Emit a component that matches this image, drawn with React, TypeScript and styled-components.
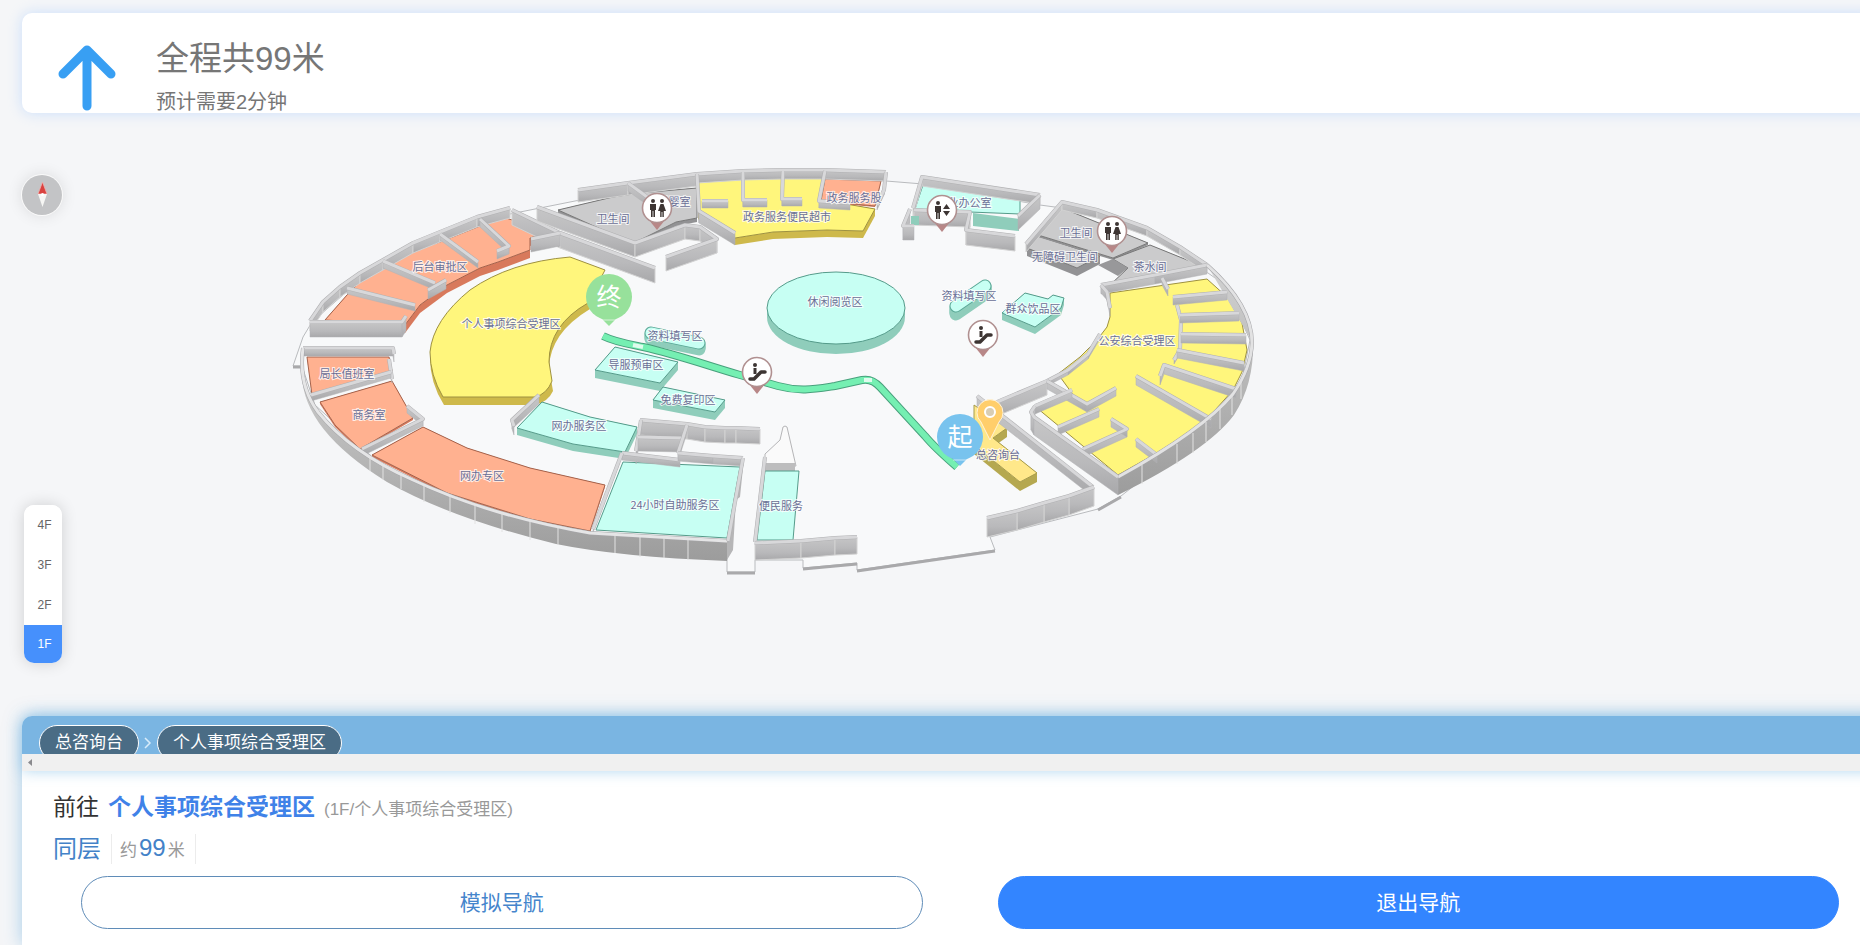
import React, { useState } from 'react';
import styled, { createGlobalStyle } from 'styled-components';

const GlobalStyle = createGlobalStyle`
  * { box-sizing: border-box; }
  body {
    margin: 0;
    background: #f5f6f8;
    font-family: "Liberation Sans", "Noto Sans CJK SC", sans-serif;
    overflow: hidden;
  }
  button { font-family: inherit; cursor: pointer; }
`;

const Page = styled.div`
  display: flex;
  flex-direction: column;
  min-height: 100vh;
  padding: 13px 0 0 22px;
  overflow: hidden;
`;

const Summary = styled.header`
  display: flex;
  height: 100px;
  flex: none;
  gap: 40px;
  margin-right: -22px;
  padding-left: 36px;
  background: #fff;
  border-radius: 10px;
  box-shadow: 0 0 14px rgba(150, 195, 255, 0.45);
`;

const ArrowIcon = styled.svg`
  width: 58px;
  height: 70px;
  margin-top: 30px;
`;

const SummaryText = styled.div`
  padding-top: 24px;
  color: #767676;
`;

const Total = styled.h1`
  margin: 0;
  font-size: 33px;
  line-height: 44px;
  font-weight: 400;
`;

const Estimate = styled.p`
  margin: 7px 0 0;
  font-size: 20px;
  line-height: 28px;
`;

const Stage = styled.main`
  display: grid;
  grid-template-columns: 42px 1fr;
  height: 603px;
  flex: none;
`;

const Rail = styled.aside`
  display: flex;
  flex-direction: column;
  justify-content: space-between;
  align-items: flex-start;
  padding: 62px 0 53px;
`;

const Compass = styled.button`
  width: 40px;
  height: 40px;
  padding: 0;
  border: 0;
  border-radius: 50%;
  background: #c3c4c6;
  box-shadow: 0 0 0 1px #fafafa, 0 0 16px rgba(0, 0, 0, 0.12);
  svg { display: block; }
`;

const Floors = styled.nav`
  display: flex;
  flex-direction: column;
  width: 38px;
  margin-left: 2px;
  overflow: hidden;
  border-radius: 10px;
  background: #fff;
  box-shadow: 0 0 16px rgba(0, 0, 0, 0.16);
`;

const FloorButton = styled.button<{ $active: boolean }>`
  height: 40px;
  padding: 0 0 0 3px;
  border: 0;
  font-size: 12px;
  color: ${p => (p.$active ? '#fff' : '#666')};
  background: ${p => (p.$active ? '#4690fc' : '#fff')};
  &:last-child { height: 38px; }
`;

const MapView = styled.svg`
  width: 1000px;
  height: 440px;
  margin: 37px 0 0 216px;
`;

const MapLabel = styled.text`
  font: 11px "Noto Sans CJK SC", sans-serif;
  fill: #6a6f96;
  stroke: rgba(255, 255, 255, 0.8);
  stroke-width: 2px;
  paint-order: stroke;
  text-anchor: middle;
  dominant-baseline: central;
`;

const PinText = styled.text`
  font: 25px "Noto Sans CJK SC", sans-serif;
  fill: #fff;
  text-anchor: middle;
  dominant-baseline: central;
`;

const Panel = styled.section`
  flex: 1;
  margin-right: -22px;
  background: #fff;
  border-radius: 10px 10px 0 0;
  box-shadow: 0 0 18px rgba(90, 165, 220, 0.5);
`;

const Trail = styled.div`
  border-radius: 10px 10px 0 0;
  background: #7ab5e2;
  box-shadow: 0 0 14px rgba(100, 175, 225, 0.5);
`;

const TrailSteps = styled.ol`
  display: flex;
  height: 38px;
  margin: 0;
  padding: 9px 0 0 17px;
  overflow: hidden;
  list-style: none;
`;

const Step = styled.li`
  display: flex;
  align-items: flex-start;
`;

const StepPill = styled.span`
  height: 36px;
  padding: 0 15px;
  border: 1px solid #fff;
  border-radius: 18px;
  background: #4a6c85;
  color: #fff;
  font-size: 17px;
  line-height: 33px;
  white-space: nowrap;
`;

const StepArrow = styled.svg`
  width: 18px;
  height: 34px;
`;

const ScrollTrack = styled.div`
  height: 17px;
  background: #f0f0f0;
  svg { display: block; }
`;

const Route = styled.div`
  padding: 18px 43px 0 31px;
`;

const Destination = styled.h2`
  display: flex;
  align-items: baseline;
  gap: 9px;
  margin: 0;
  font-size: 23px;
  line-height: 36px;
  font-weight: 400;
  color: #333;
  strong { color: #3f82e8; }
  small { font-size: 17px; color: #999; }
`;

const Distance = styled.p`
  display: flex;
  align-items: center;
  height: 30px;
  margin: 6px 0 12px;
  font-size: 24px;
  line-height: 30px;
  color: #4382c8;
`;

const Meters = styled.span`
  display: flex;
  align-items: baseline;
  gap: 2px;
  height: 30px;
  margin-left: 10px;
  padding: 0 10px 0 8px;
  border: solid #ececec;
  border-width: 0 1px;
  line-height: 28px;
  small { font-size: 17px; color: #999; }
`;

const Actions = styled.div`
  display: grid;
  grid-template-columns: 1fr 1fr;
  gap: 75px;
  padding-left: 28px;
`;

const ActionButton = styled.button<{ $primary?: boolean }>`
  height: 53px;
  padding: 0 0 4px;
  border: 1px solid ${p => (p.$primary ? '#3385ff' : '#5f8cb8')};
  border-radius: 27px;
  background: ${p => (p.$primary ? '#3385ff' : '#fff')};
  color: ${p => (p.$primary ? '#fff' : '#4585cc')};
  font-size: 21px;
`;

type P = [number, number];

// Parses "x,y x,y" into coordinate pairs.
const parse = (s: string): P[] => s.split(' ').map(q => q.split(',').map(Number) as P);

const faces = (pts: P[], h: number) =>
  pts.slice(1).map((b, i) => {
    const a = pts[i];
    return `M${a[0]} ${a[1]}L${b[0]} ${b[1]}v${h}L${a[0]} ${a[1] + h}Z`;
  });

const Wall = ({ at, h = 8, seams = false }: { at: string; h?: number; seams?: boolean }) => {
  const pts = parse(at);
  return (
    <g strokeLinejoin="round">
      {faces(pts, h).map((d, i) => (
        <path key={i} d={d} fill="url(#wallFace)" stroke={seams ? '#d2d2d2' : '#b2b2b4'} strokeWidth={seams ? 1 : 0.5} />
      ))}
      <polyline points={at} fill="none" stroke="#b0b0b2" strokeWidth="4" />
      <polyline points={at} fill="none" stroke="#d8d8da" strokeWidth="3" />
    </g>
  );
};

const TONES = {
  orange: ['#ffb190', '#d8795c', '#a5634c'],
  yellow: ['#fff67c', '#ceb94b', '#9e9140'],
  teal: ['#c7fff3', '#8fcdbb', '#559b8a'],
  gray: ['#cbcbcc', '#929294', '#777'],
  desk: ['#ffe88a', '#b5a850', '#a69b4c'],
};

const Slab = ({ at, h = 0, tone }: { at: string; h?: number; tone: keyof typeof TONES }) => {
  const pts = parse(at);
  const [top, side, edge] = TONES[tone];
  return (
    <g strokeLinejoin="round">
      {h > 0 && faces([...pts, pts[0]], h).map((d, i) => <path key={i} d={d} fill={side} />)}
      <polygon points={at} fill={top} stroke={edge} strokeWidth="1" />
    </g>
  );
};

const Bean = ({ from, to, h }: { from: P; to: P; h: number }) => {
  const line = { x1: from[0], y1: from[1], x2: to[0], y2: to[1], strokeLinecap: 'round' as const };
  return (
    <g>
      {Array.from({ length: h }, (_, i) => (
        <line key={i} {...line} y1={from[1] + h - i} y2={to[1] + h - i} stroke="#8fcdbb" strokeWidth="13" />
      ))}
      <line {...line} stroke="#5aa896" strokeWidth="13" />
      <line {...line} stroke="#c7fff3" strokeWidth="11" />
    </g>
  );
};

const Man = ({ x }: { x: number }) => (
  <g transform={`translate(${x} 0)`} fill="#3d3533">
    <circle cy="-7" r="2" />
    <path d="M-3-4H3V2H2V9H0.4V3H-0.4V9H-2V2H-3Z" />
  </g>
);

const Poi = ({ x, y, kind }: { x: number; y: number; kind: 'wc' | 'lift' | 'escalator' }) => (
  <g transform={`translate(${x} ${y})`}>
    <path d="M-8 12L0 22L8 12Z" fill="#b88787" />
    <circle r="14.5" fill="#fff" stroke="#b09090" strokeWidth="1.6" />
    {kind === 'wc' && (
      <>
        <Man x={-4} />
        <g transform="translate(5 0)" fill="#3d3533">
          <circle cy="-7" r="2" />
          <path d="M-1.500-4H1.500L4 3H1.800V9H.4V4H-.4V9H-1.800V3H-4Z" />
        </g>
      </>
    )}
    {kind === 'lift' && (
      <>
        <Man x={-4} />
        <path d="M1-1L4.500-6L8-1ZM1 1H8L4.500 6Z" fill="#3d3533" />
      </>
    )}
    {kind === 'escalator' && (
      <g>
        <circle cx="-2" cy="-7" r="2" fill="#3d3533" />
        <path d="M-2-4V2" stroke="#3d3533" strokeWidth="3" />
        <path d="M-7 7H-3L4 0H8" fill="none" stroke="#3d3533" strokeWidth="3.500" strokeLinecap="round" strokeLinejoin="round" />
      </g>
    )}
  </g>
);

const RoutePin = ({ x, y, color, children }: { x: number; y: number; color: string; children: string }) => (
  <g transform={`translate(${x} ${y})`}>
    <path d="M-9 20L0 29L9 20Z" fill={color} />
    <circle r="23" fill={color} />
    <path d="M-7 23H7" stroke="#fff" strokeOpacity="0.6" />
    <PinText y={-2}>{children}</PinText>
  </g>
);

const LABELS: [string, number, number][] = [
  ['后台审批区', 440, 266],
  ['个人事项综合受理区', 511, 323],
  ['局长值班室', 347, 373],
  ['商务室', 369, 414],
  ['网办专区', 482, 475],
  ['网办服务区', 579, 425],
  ['24小时自助服务区', 675, 504],
  ['便民服务', 781, 505],
  ['卫生间', 613, 218],
  ['母婴室', 674, 201],
  ['政务服务便民超市', 787, 216],
  ['政务服务股', 854, 197],
  ['休闲阅览区', 835, 301],
  ['资料填写区', 675, 335],
  ['导服预审区', 636, 364],
  ['免费复印区', 688, 399],
  ['物业办公室', 964, 202],
  ['卫生间', 1076, 232],
  ['无障碍卫生间', 1065, 256],
  ['茶水间', 1150, 266],
  ['资料填写区', 969, 295],
  ['群众饮品区', 1033, 308],
  ['公安综合受理区', 1137, 340],
  ['总咨询台', 998, 454],
];

const ROUTE =
  'M603 336C615 342 628 344 643 347C675 354 706 365 740 375L778 386C800 392 815 389 835 386L862 380Q872 378 880 387L925 436Q934 447 957 467';

const FloorMap = () => (
  <MapView viewBox="280 150 1000 440" role="img" aria-label="1F">
    <defs>
      <linearGradient id="wallFace" x1="0" y1="0" x2="0" y2="1">
        <stop offset="0" stopColor="#c6c6c7" />
        <stop offset="0.6" stopColor="#b9b9bb" />
        <stop offset="1" stopColor="#a8a8aa" />
      </linearGradient>
      <linearGradient id="outerFace" x1="0" y1="0" x2="0" y2="1">
        <stop offset="0" stopColor="#d2d2d2" />
        <stop offset="1" stopColor="#9c9c9c" />
      </linearGradient>
    </defs>

    {/* ground plate */}
    <path
      d="M293 366L303 337L312 322L383 260L510 214L580 200L697 175L886 181L923 184L1040 205L1062 208L1150 232L1225 285L1250 340L1240 390L1205 430L1121 496L1098 509L990 537L995 550L857 570V563L803 568V560H755V572H727V558L560 542L400 482L315 405L302 366Z"
      fill="#f8f9fa" stroke="#b9bbbe" strokeWidth="1"
    />
    <path d="M995 551L857 571M857 564L803 569M755 573H727M1121 497L1098 510M293 367H301" stroke="#a9a9ab" strokeWidth="3" />

    {/* north-west offices */}
    <Slab tone="orange" h={8} at="325,320 347,295 365,277 397,256 440,242 480,226 503,217 549,232 530,238 530,250 498,262 480,268 447,285 420,305 405,325" />
    <Wall h={10} at="310,321 323,302 340,287 360,273 383,260 413,243 440,232 477,217 510,208" seams />
    <Wall h={6} at="347,288 415,305" />
    <Wall h={7} at="383,261 435,283" />
    <Wall h={9} at="446,280 428,290" />
    <Wall h={6} at="440,234 478,262" />
    <Wall h={8} at="480,219 509,246 497,251" />
    <Wall h={15} at="310,322 402,322 406,316" />

    {/* north toilets */}
    <Slab tone="gray" h={4} at="558,210 613,197 640,193 697,188 697,218 676,222 640,240 632,243" />
    <Wall h={12} at="578,190 628,183 697,174" seams />
    <Wall h={8} at="628,183 650,199" />
    <Wall h={15} at="512,210 560,233 655,268" seams />
    <Wall h={13} at="560,233 531,239" />
    <Wall h={14} at="537,207 635,243 685,225 700,227 717,239 666,257" seams />

    {/* north market */}
    <Slab tone="yellow" h={7} at="698,181 740,178 823,177 823,200 875,209 863,231 827,230 773,232 735,238 698,212" />
    <Slab tone="orange" h={1} at="825,179 881,181 875,206 821,201" />
    <Wall h={9} at="697,174 743,171 783,170 825,170 886,172" seams />
    <Wall h={12} at="697,174 699,211 735,233" />
    <Wall h={7} at="702,201 728,201" />
    <Wall h={7} at="743,172 743,200 767,200" />
    <Wall h={7} at="783,171 782,199 802,199" />
    <Wall h={7} at="825,171 819,201 850,203" />
    <Wall h={5} at="886,172 884,190 877,205" />

    {/* property office */}
    <Slab tone="teal" at="923,185 1020,200 1020,214 970,212 915,209" />
    <path d="M973 213L1019 219V231L973 226Z" fill="#8fcdbb" />
    <Wall h={9} at="913,208 922,177 1040,195" seams />
    <Wall h={14} at="1040,195 1018,216" />
    <Wall h={15} at="914,210 970,212 966,230 1015,236" seams />
    <path d="M911 216H919V225H911Z" fill="#8fcdbb" />
    <Wall h={14} at="910,209 903,226 914,226" />

    {/* north-east toilets and pantry */}
    <Slab tone="gray" h={8} at="1038,236 1100,256 1077,268 1027,248" />
    <Slab tone="gray" h={2} at="1062,208 1148,243 1113,258 1038,235" />
    <Slab tone="gray" h={3} at="1150,245 1202,266 1110,285 1128,268 1113,259" />
    <path d="M1113 259L1128 268L1118 276L1098 265Z" fill="#98989a" />

    {/* public security hall */}
    <Slab tone="yellow" at="1110,293 1207,279 1227,297 1242,323 1247,350 1242,372 1233,390 1208,418 1180,438 1157,453 1118,475 1037,408 1074,396 1058,374 1080,357 1097,340 1107,327 1110,317" />
    <Wall h={8} at="1026,244 1062,202 1097,210 1147,228 1180,247 1207,265" seams />
    <path d="M1207 265Q1252 305 1252 343Q1251 368 1233 394Q1203 430 1118 477V495Q1207 451 1234 415Q1254 384 1253 343Z" fill="url(#outerFace)" />
    <Wall h={9} at="1101,285 1155,275 1207,265" />
    <Wall h={8} at="1101,285 1107,292 1110,308" />
    <Wall h={7} at="1162,278 1168,289" />
    <Wall h={8} at="1173,297 1227,292" />
    <Wall h={4} at="1177,305 1181,320 1180,350 1174,360" />
    <Wall h={8} at="1180,315 1239,313" />
    <Wall h={9} at="1181,334 1246,335" />
    <Wall h={8} at="1177,350 1244,363" />
    <Wall h={9} at="1160,376 1164,365 1236,389" />
    <Wall h={9} at="1136,376 1211,419" />
    <Wall h={5} at="1100,334 1088,354 1068,370 1047,381" />
    <Wall h={14} at="1047,381 997,402" seams />
    <Wall h={8} at="1047,381 1087,404 1116,388" />
    <Wall h={8} at="1035,406 1072,390" />
    <Wall h={8} at="1058,427 1099,409" />
    <Wall h={8} at="1083,449 1127,429 1111,419" />
    <Wall h={8} at="1136,439 1157,455" />
    <path d="M1207 265Q1252 305 1252 343Q1251 368 1233 394Q1203 430 1118 477" fill="none" stroke="#a5a5a8" strokeWidth="4" />
    <path d="M1207 265Q1252 305 1252 343Q1251 368 1233 394Q1203 430 1118 477" fill="none" stroke="#e2e2e3" strokeWidth="3" />
    <path d="M1142 465V484M1177 444V464M1193 433V453M1206 422V442M1220 409V429M1232 396V415M1241 382V399" stroke="#e2e2e2" />
    <Wall h={18} at="1035,406 1031,412 1034,417 1118,477" />

    {/* information desk */}
    <Slab tone="desk" h={9} at="974,405 1007,428 993,438 1037,473 1020,482 974,445" />
    <Wall h={10} at="977,396 1093,487" />
    <Wall h={19} at="1094,487 1069,496 1044,503 1017,511 987,518" seams />

    {/* personal affairs hall */}
    <path d="M570 265L605 280L590 309Q550 333 549 368L553 391Q548 402 535 405H444Q430 383 430 358Z" fill="#ceb94b" />
    <path d="M570 257L605 270L588 303Q549 325 549 362L552 381Q547 394 535 397H443Q430 375 430 352Q433 320 470 290Q510 262 570 257Z" fill="#fff67c" stroke="#9e9140" />

    {/* islands */}
    <path d="M767 308v9a69 37 0 0 0 138 0v-9Z" fill="#8fcdbb" />
    <ellipse cx="836" cy="308" rx="69" ry="36" fill="#c7fff3" stroke="#559b8a" />
    <Bean from={[651, 333]} to={[699, 343]} h={6} />
    <Bean from={[956, 306]} to={[985, 286]} h={8} />
    <Slab tone="teal" h={8} at="615,347 678,362 660,383 595,370" />
    <Slab tone="teal" h={8} at="663,387 725,400 715,412 653,400" />
    <Slab tone="teal" h={7} at="1025,293 1048,299 1053,295 1064,298 1061,308 1035,327 1002,313" />
    <Slab tone="teal" h={7} at="542,402 590,417 637,427 625,452 573,444 517,428" />
    <Wall h={9} at="539,395 512,420 514,426" />

    {/* south-west rooms */}
    <Slab tone="orange" h={1} at="307,357 389,357 392,371 312,395" />
    <Slab tone="orange" h={2} at="320,402 392,381 413,418 360,449 335,425" />
    <Slab tone="orange" h={2} at="372,455 423,427 467,448 530,468 605,485 590,531 530,519 447,493" />
    <Wall h={8} at="303,348 393,348 394,354" />
    <Wall h={4} at="389,359 392,379" />
    <Wall h={6} at="311,395 391,372" />
    <Wall h={7} at="407,406 423,419 362,449" />
    <path d="M303 348Q298 385 318 412Q350 452 413 480Q490 516 590 533L727 541V561Q620 557 556 544Q450 518 387 482Q303 430 302 375Z" fill="url(#outerFace)" />
    <path d="M303 348Q298 385 318 412Q350 452 413 480Q490 516 590 533L727 541" fill="none" stroke="#a5a5a8" strokeWidth="4" />
    <path d="M303 348Q298 385 318 412Q350 452 413 480Q490 516 590 533L727 541" fill="none" stroke="#e5e5e6" strokeWidth="3" />
    <path d="M370 458V471M383 466V480M401 475V489M424 486V502M450 496V513M475 505V524M502 513V532M530 521V540M558 528V545M615 535V553M640 537V557M664 538V558M688 540V560" stroke="#e2e2e2" />

    {/* self-service area */}
    <Slab tone="teal" at="623,462 740,467 727,538 596,530" />
    <Wall h={15} at="640,420 687,424 705,427 725,428 736,428 760,429" seams />
    <Wall h={13} at="636,451 641,420" />
    <Wall h={14} at="638,437 681,438" />
    <Wall h={8} at="687,425 678,453" />
    <Wall h={7} at="622,453 680,460" />
    <Wall h={8} at="678,453 713,456 743,458" />
    <Wall h={3} at="622,453 593,529" />
    <path d="M744 458L740 497L736 500L733 550L727 560V540Z" fill="#b6b6b7" />
    <Wall h={2} at="743,458 728,541" />

    {/* convenience service */}
    <path d="M783 427Q785 425 787 427L796 466H765V454L780 440Z" fill="#fafafa" stroke="#b5b5b7" />
    <path d="M765 463H795V471H765Z" fill="#bdbdbe" />
    <Slab tone="teal" at="765,471 799,471 793,540 757,540" />
    <Wall h={3} at="765,457 755,542" />
    <Wall h={17} at="755,543 801,541 835,538 857,537" seams />

    {/* walking route */}
    <path d={ROUTE} fill="none" stroke="#48a07c" strokeWidth="8" />
    <path d={ROUTE} fill="none" stroke="#75efb2" strokeWidth="6" />
    <path d="M633 345L643 347M864 380L872 380" stroke="#dffbed" strokeWidth="4" />

    {LABELS.map(([name, x, y]) => (
      <MapLabel key={`${name}${x}`} x={x} y={y}>{name}</MapLabel>
    ))}

    <Poi x={657} y={208} kind="wc" />
    <Poi x={942} y={210} kind="lift" />
    <Poi x={1112} y={231} kind="wc" />
    <Poi x={983} y={335} kind="escalator" />
    <Poi x={757} y={372} kind="escalator" />

    <path d="M990 440L981 422A13 13 0 1 1 999 422Z" fill="#ffce6b" stroke="#fff3d8" />
    <circle cx="990" cy="412" r="5" fill="#d8cdb4" stroke="#fff" strokeWidth="2" />
    <RoutePin x={609} y={297} color="#97e19b">终</RoutePin>
    <RoutePin x={960} y={437} color="#78c3ee">起</RoutePin>
  </MapView>
);

const FLOORS = ['4F', '3F', '2F', '1F'];
const STEPS = ['总咨询台', '个人事项综合受理区'];

export default function App() {
  const [floor, setFloor] = useState('1F');
  return (
    <>
      <GlobalStyle />
      <Page>
        <Summary>
          <ArrowIcon viewBox="0 0 58 70" aria-hidden="true">
            <path d="M5 31L29 7L53 31M29 7V63" fill="none" stroke="#389ff3" strokeWidth="9" strokeLinecap="round" strokeLinejoin="round" />
          </ArrowIcon>
          <SummaryText>
            <Total>全程共99米</Total>
            <Estimate>预计需要2分钟</Estimate>
          </SummaryText>
        </Summary>

        <Stage>
          <Rail>
            <Compass aria-label="指南针">
              <svg width="40" height="40" viewBox="0 0 40 40">
                <path d="M20.500 7L25 19H16Z" fill="#d9423f" stroke="#efb1ae" strokeWidth="0.8" />
                <path d="M16 19H25L20.500 32Z" fill="#f6f6f4" />
                <circle cx="20.500" cy="19.500" r="1.500" fill="#fff" />
              </svg>
            </Compass>
            <Floors>
              {FLOORS.map(f => (
                <FloorButton key={f} $active={f === floor} onClick={() => setFloor(f)}>{f}</FloorButton>
              ))}
            </Floors>
          </Rail>
          <FloorMap />
        </Stage>

        <Panel>
          <Trail>
            <TrailSteps>
              {STEPS.map((step, i) => (
                <Step key={step}>
                  {i > 0 && (
                    <StepArrow viewBox="0 0 18 34" aria-hidden="true">
                      <path d="M6 13L11 18L6 23" fill="none" stroke="#d9ecfa" strokeWidth="1.500" />
                    </StepArrow>
                  )}
                  <StepPill>{step}</StepPill>
                </Step>
              ))}
            </TrailSteps>
            <ScrollTrack>
              <svg width="17" height="17" viewBox="0 0 17 17"><path d="M10 5V12L6 8.500Z" fill="#8a8a8e" /></svg>
            </ScrollTrack>
          </Trail>
          <Route>
            <Destination>
              <span>前往</span>
              <strong>个人事项综合受理区</strong>
              <small>(1F/个人事项综合受理区)</small>
            </Destination>
            <Distance>
              同层
              <Meters><small>约</small>99<small>米</small></Meters>
            </Distance>
            <Actions>
              <ActionButton>模拟导航</ActionButton>
              <ActionButton $primary>退出导航</ActionButton>
            </Actions>
          </Route>
        </Panel>
      </Page>
    </>
  );
}
